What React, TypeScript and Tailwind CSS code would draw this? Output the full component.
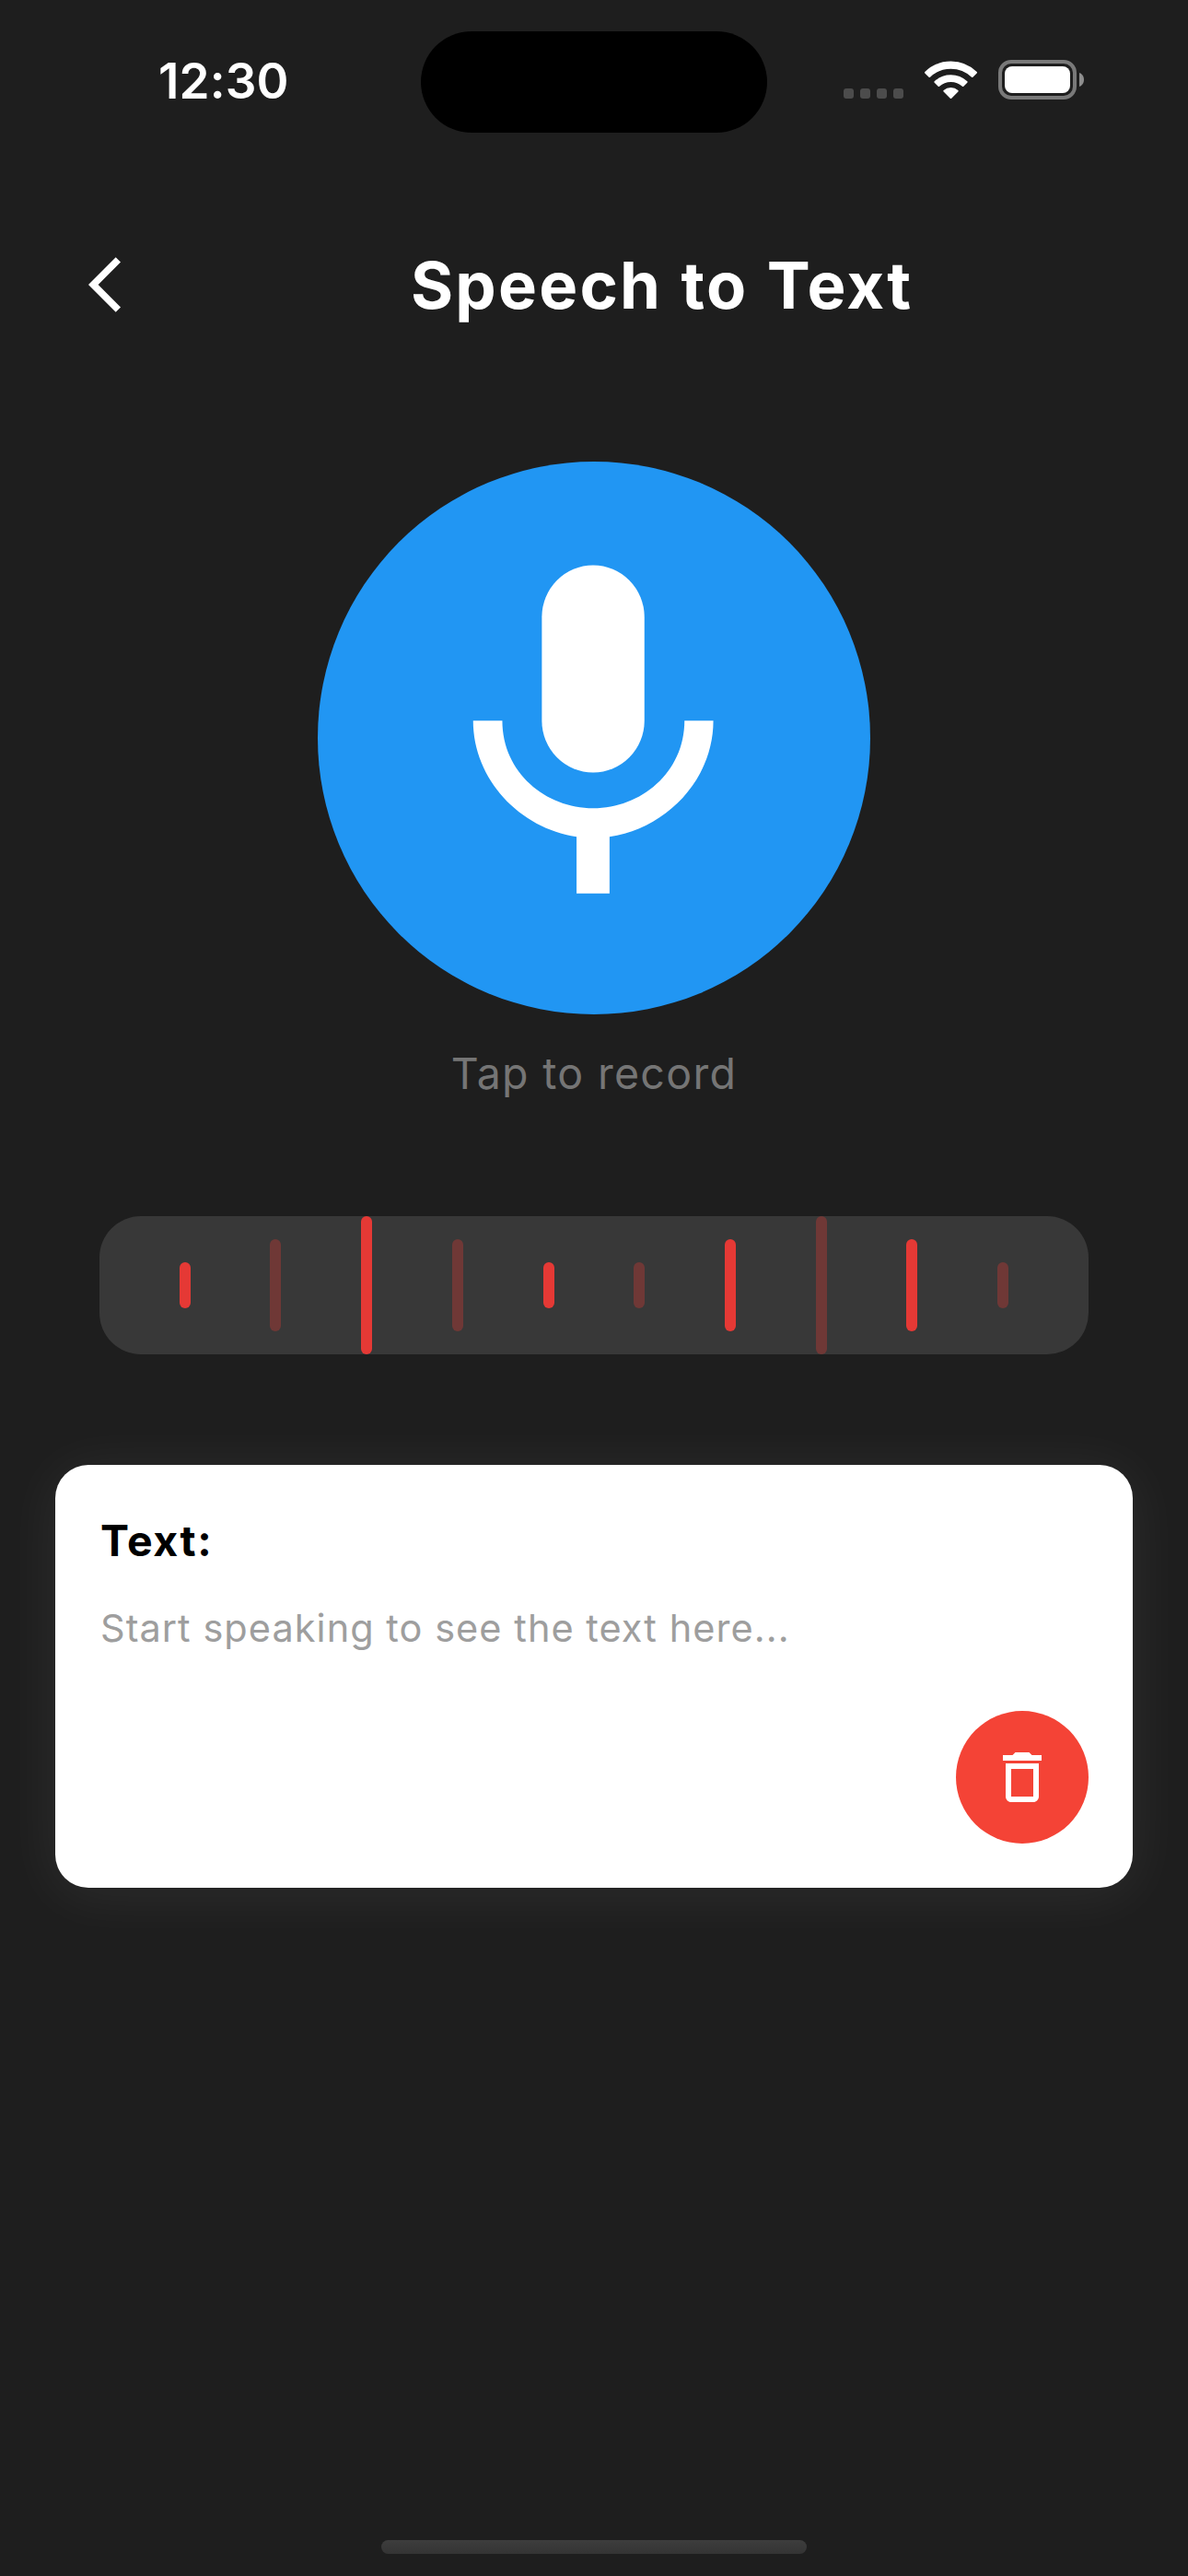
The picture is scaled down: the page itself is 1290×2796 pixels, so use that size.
const bars = [
  { size: "h-[50px]", active: true },
  { size: "h-[100px]", active: false },
  { size: "h-[150px]", active: true },
  { size: "h-[100px]", active: false },
  { size: "h-[50px]", active: true },
  { size: "h-[50px]", active: false },
  { size: "h-[100px]", active: true },
  { size: "h-[150px]", active: false },
  { size: "h-[100px]", active: true },
  { size: "h-[50px]", active: false },
];

function WifiIcon() {
  return (
    <svg
      width="60"
      height="44"
      viewBox="-0.5 0 60 44"
      fill="white"
      stroke="white"
      strokeWidth="2"
      strokeLinejoin="round"
    >
      <path d="M2.5 13.8A39.2 39.2 0 0 1 57.500 13.800L53.200 18A33.600 33.600 0 0 0 6.800 18Z" />
      <path d="M12.900 24A25 25 0 0 1 47.100 24L43.100 28A19.400 19.400 0 0 0 16.900 28Z" />
      <path d="M22.800 33.800A11 11 0 0 1 37.200 33.800L30 41Z" />
    </svg>
  );
}

function StatusBar() {
  return (
    <div className="relative flex h-[178px] items-start justify-between pl-[172px] pr-[113px]">
      <span className="mt-[58px] text-[53px] leading-[60px] font-semibold tracking-[0.1px] text-white">
        12:30
      </span>
      <div className="absolute left-[457px] top-[34px] h-[110px] w-[376px] rounded-full bg-black" />
      <div className="mt-[65px] flex items-start">
        <div className="mt-[31px] flex gap-[7px]">
          {[0, 1, 2, 3].map((i) => (
            <span key={i} className="size-[11px] rounded-[3px] bg-[#4c4c4c]" />
          ))}
        </div>
        <div className="ml-[21px]">
          <WifiIcon />
        </div>
        <div className="ml-[22px] flex h-[43px] w-[85px] rounded-[14px] border-4 border-[#797979] p-[3px]">
          <div className="flex-1 rounded-[8px] bg-white" />
        </div>
        <svg className="ml-[3px] mt-[14px]" width="5" height="15" viewBox="0 0 5 15" fill="#8e8e8e">
          <path d="M0 0C3 1 5 4 5 7.500S3 14 0 15Z" />
        </svg>
      </div>
    </div>
  );
}

export default function App() {
  return (
    <div className="flex h-[2796px] w-[1290px] flex-col bg-[#1e1e1e] font-['Inter',sans-serif]">
      <StatusBar />

      <header className="flex h-[262px] items-center pl-24">
        <svg width="72" height="72" viewBox="0 0 24 24" fill="white">
          <path d="M11.670 3.870L9.900 2.100 0 12l9.900 9.900 1.770-1.770L3.540 12z" />
        </svg>
        <h1 className="ml-[278px] mt-[2px] text-[70.500px] leading-[90px] font-bold tracking-[2.2px] [word-spacing:1.5px] text-white">
          Speech to Text
        </h1>
      </header>

      <main className="flex flex-1 flex-col">
        <button className="mt-[61px] flex size-[600px] items-center justify-center self-center rounded-full bg-[#2196f3]">
          <svg width="450" height="450" viewBox="0 0 24 24" fill="white">
            <rect x="8.980" y="2" width="5.940" height="12" rx="2.970" ry="3" />
            <path d="M17.240 11C17.240 14 14.710 16.070 11.960 16.070S6.690 14 6.690 11H5C5 14.410 7.720 17.230 10.990 17.720V21H12.900V17.720C16.190 17.240 18.910 14.420 18.910 11Z" />
          </svg>
        </button>
        <p className="mt-[34px] text-center text-[46.500px] leading-[60px] tracking-[1.300px] text-[#757575]">
          Tap to record
        </p>

        <div className="mx-[108px] mt-[125px] flex h-[150px] items-center justify-evenly rounded-[45px] bg-[#383838]">
          {bars.map((bar, i) => (
            <span
              key={i}
              className={`w-3 rounded-full ${bar.size} ${bar.active ? "bg-[#e53935]" : "bg-[#6f3836]"}`}
            />
          ))}
        </div>

        <section className="mx-[60px] mt-[120px] flex h-[459px] flex-col rounded-[36px] bg-white px-12 pt-[52px] shadow-[0_6px_60px_6px_rgba(255,255,255,0.06)]">
          <h2 className="ml-px text-[46.500px] leading-[60px] font-bold tracking-[1.600px] text-black">Text:</h2>
          <p className="ml-px mt-[35px] text-[41.500px] leading-[60px] tracking-[1.030px] text-[#9e9e9e]">
            Start speaking to see the text here...
          </p>
          <button className="mt-[60px] flex size-36 items-center justify-center self-end rounded-full bg-[#f44336]">
            <svg width="72" height="72" viewBox="0 0 24 24" fill="white">
              <path d="M6 19c0 1.100.9 2 2 2h8c1.100 0 2-.9 2-2V7H6v12zM8 9h8v10H8V9zm7.500-5l-1-1h-5l-1 1H5v2h14V4h-3.500z" />
            </svg>
          </button>
        </section>
      </main>

      <div className="mb-6 h-[15px] w-[462px] self-center rounded-full bg-linear-to-b from-[#3d3d3d] to-[#343434]" />
    </div>
  );
}
